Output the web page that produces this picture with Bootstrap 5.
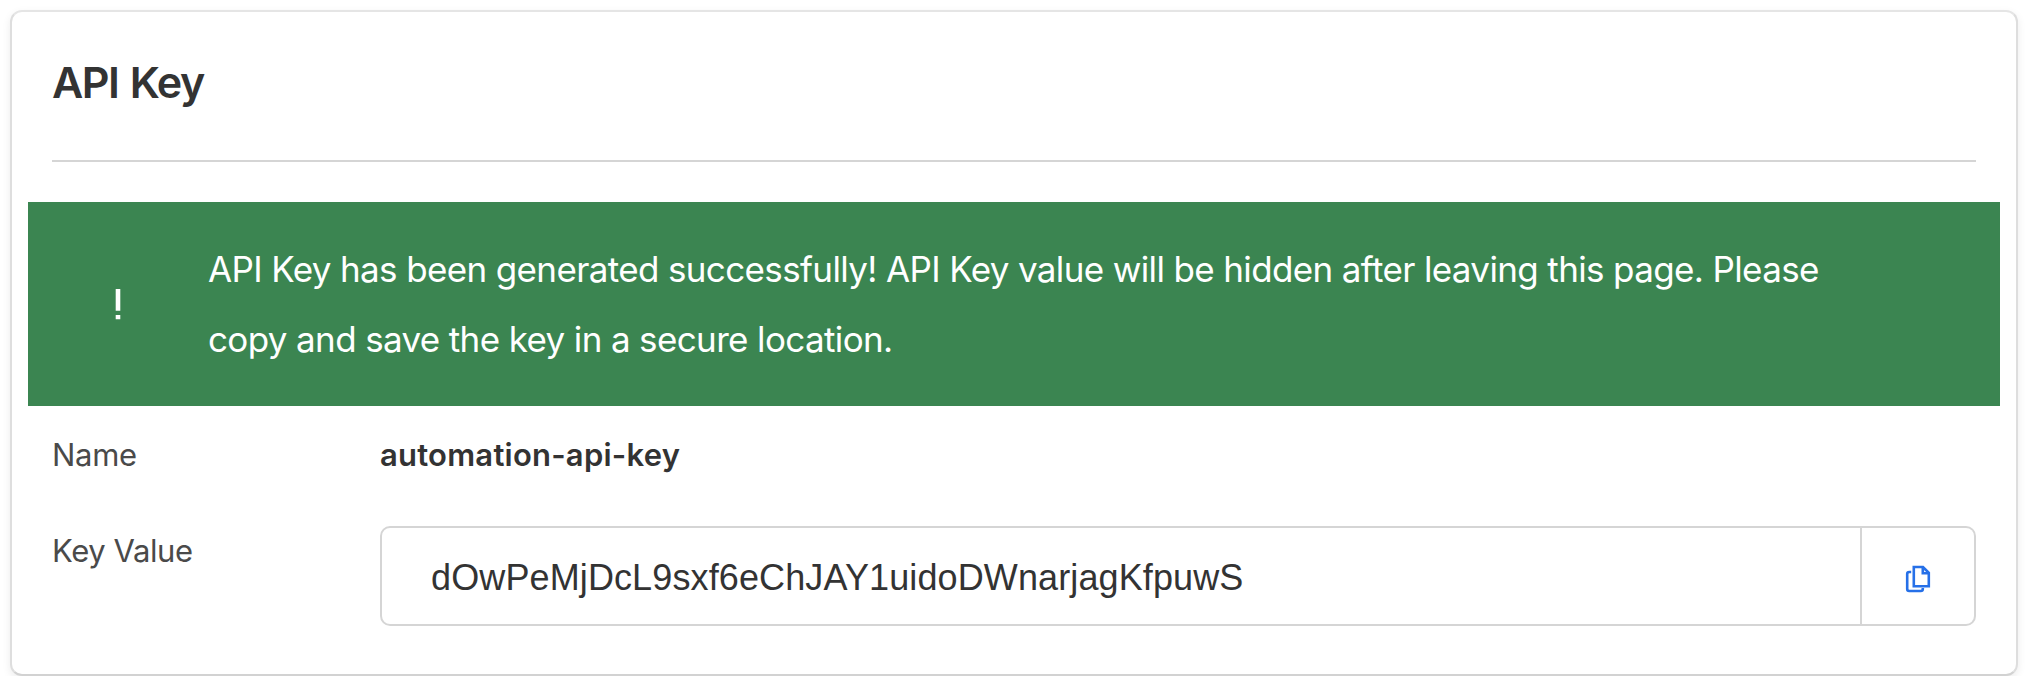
<!DOCTYPE html>
<html lang="en">
<head>
<meta charset="utf-8">
<meta name="viewport" content="width=device-width, initial-scale=1">
<title>API Key</title>
<link href="https://cdn.jsdelivr.net/npm/bootstrap@5.3.0/dist/css/bootstrap.min.css" rel="stylesheet">
<style>
body{background:#fff;color:#333;font-family:Inter,"Liberation Sans",sans-serif;padding:10px 16px 0 10px}
.key-card{height:666px;border:2px solid #dedede;border-top-color:#e5e5e5;border-bottom-color:#d2d2d2;border-radius:12px;box-shadow:0 3px 8px rgba(0,0,0,.08);padding:0 40px}
.key-title{font-size:43px;font-weight:600;line-height:52px;margin:44px 0 0;padding-bottom:52px;border-bottom:2px solid #d5d5d5;letter-spacing:-1.5px;word-spacing:2px}
.notice{background:#3b8551;color:#fff;height:204px;margin:40px -24px 0;padding:32px 0 0 180px;font-size:35px;line-height:70px;letter-spacing:-.635px;position:relative}
.notice svg{position:absolute;left:86px;top:87px}
.field-label{width:328px;flex:none;color:#4a4a4a;font-size:31px;line-height:40px;letter-spacing:-.3px}
.name-row{margin-top:29px}
.field-name{font-size:31px;font-weight:600;line-height:40px;letter-spacing:.23px}
.key-row{margin-top:51px}
.key-row .field-label{padding-top:5px;letter-spacing:-.42px}
.key-row .input-group{height:100px}
.key-row .form-control{border:2px solid #d5d5d5;border-radius:10px;padding:4px 0 0 49px;font:36px/92px "Liberation Sans",sans-serif;letter-spacing:.12px;color:#333;height:100px}
.key-row .input-group .btn{border:2px solid #d5d5d5;border-radius:10px;width:115px;padding:5px 0 0 1px}
</style>
</head>
<body>
<main class="card key-card">
  <h1 class="key-title">API Key</h1>
  <div class="notice" role="alert">
    <svg width="8" height="32" viewBox="0 0 8 32" fill="#fff" aria-hidden="true"><path d="M1.700 0h4.600v21.700H1.700zM1.700 26h4.600v4.300H1.700z"/></svg>
    <span class="msg">API Key has been generated successfully! API Key value will be hidden after leaving this page. Please<br>copy and save the key in a secure location.</span>
  </div>
  <div class="d-flex name-row">
    <div class="field-label">Name</div>
    <div class="field-name">automation-api-key</div>
  </div>
  <div class="d-flex key-row">
    <label class="field-label" for="keyValue">Key Value</label>
    <div class="input-group">
      <input id="keyValue" class="form-control" readonly value="dOwPeMjDcL9sxf6eChJAY1uidoDWnarjagKfpuwS">
      <button class="btn border-start-0 d-flex align-items-center justify-content-center" type="button" aria-label="Copy">
        <svg width="26" height="28" viewBox="0 0 26 28" fill="none" stroke="#2670e8" stroke-width="2.600"><path d="M8.800 2H18l5.800 5.800V21.300H8.800zM17.800 2v6.200h6M6.200 7H4.200Q2.200 7 2.200 9V24Q2.200 26 4.200 26H15.800Q17.800 26 17.800 24V23"/></svg>
      </button>
    </div>
  </div>
</main>
<script src="https://cdn.jsdelivr.net/npm/bootstrap@5.3.0/dist/js/bootstrap.bundle.min.js"></script>
</body>
</html>
